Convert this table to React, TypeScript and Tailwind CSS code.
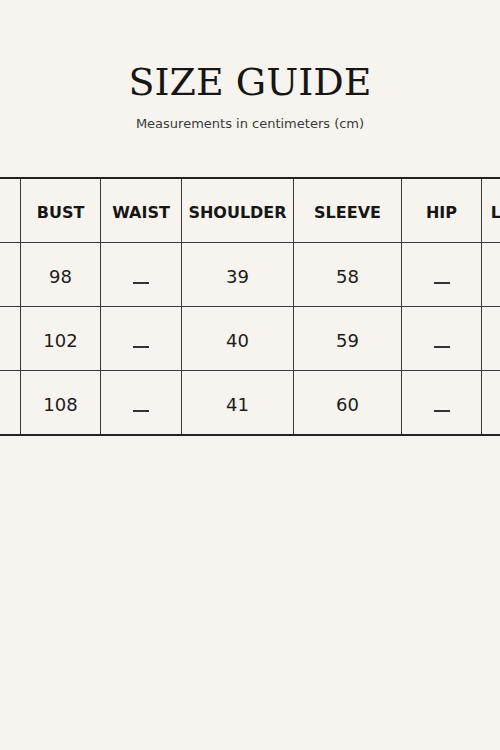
import React from "react";

const cols = [
  { key: "size", label: "SIZE", w: "w-[92px]" },
  { key: "bust", label: "BUST", w: "w-[80px]" },
  { key: "waist", label: "WAIST", w: "w-[81px]" },
  { key: "shoulder", label: "SHOULDER", w: "w-[112px]" },
  { key: "sleeve", label: "SLEEVE", w: "w-[108px]" },
  { key: "hip", label: "HIP", w: "w-[80px]" },
  { key: "length", label: "LENGTH", w: "w-[89px]" },
];

const rows: (string | null)[][] = [
  ["S", "98", null, "39", "58", null, "66"],
  ["M", "102", null, "40", "59", null, "67"],
  ["L", "108", null, "41", "60", null, "68"],
];

function Dash() {
  return <span className="inline-block w-4 h-[2px] bg-[#333] translate-y-[6px]" />;
}

export default function App() {
  return (
    <div
      className="min-h-screen w-full overflow-hidden bg-[#f7f4ef] text-[#1a1a1a]"
      style={{ fontFamily: '"DejaVu Sans", sans-serif' }}
    >
      <div className="pt-[59px] flex flex-col items-center">
        <h1
          className="text-[38px] leading-[46px] text-[#161616]"
          style={{ fontFamily: '"DejaVu Serif", serif' }}
        >
          SIZE GUIDE
        </h1>
        <p className="mt-[10px] text-[13px] leading-[18px] text-[#3a3a3a]">
          Measurements in centimeters (cm)
        </p>
      </div>
      <div className="mt-[44px] flex justify-center">
        <div className="shrink-0 border-y-2 border-[#222]">
          <div className="flex">
            {cols.map((c, i) => (
              <div
                key={c.key}
                className={`${c.w} shrink-0 h-16 pt-[4px] flex items-center justify-center border-b border-[#3a3a3a] ${
                  i < cols.length - 1 ? "border-r" : ""
                } text-[16px] font-bold text-[#161616]`}
              >
                {c.label}
              </div>
            ))}
          </div>
          {rows.map((r, ri) => (
            <div key={ri} className="flex">
              {r.map((v, i) => (
                <div
                  key={i}
                  className={`${cols[i].w} shrink-0 ${
                    ri < rows.length - 1 ? "h-16 border-b" : "h-[63px]"
                  } pt-[4px] flex items-center justify-center border-[#3a3a3a] ${
                    i < cols.length - 1 ? "border-r" : ""
                  } text-[18px] text-[#1c1c1c]`}
                >
                  {v === null ? <Dash /> : v}
                </div>
              ))}
            </div>
          ))}
        </div>
      </div>
    </div>
  );
}
